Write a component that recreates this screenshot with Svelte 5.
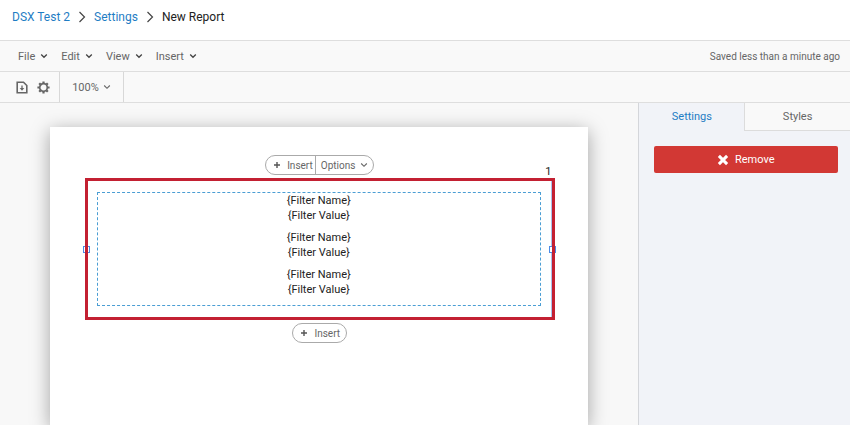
<script>
	const menus = ['File', 'Edit', 'View', 'Insert'];
	const filters = [1, 2, 3];
	let activeTab = $state('Settings');
</script>

{#snippet chevron()}
	<svg class="chevron" viewBox="0 0 8 8" aria-hidden="true"><path d="M1.2 2.5 4 5.3 6.8 2.5" /></svg>
{/snippet}

{#snippet crumbArrow()}
	<svg class="crumb-arrow" viewBox="0 0 8 12" aria-hidden="true"><path d="M1.5 1 6.5 6 1.5 11" /></svg>
{/snippet}

{#snippet plus()}
	<svg class="plus" viewBox="0 0 8 8" aria-hidden="true"><path d="M4 1v6M1 4h6" /></svg>
{/snippet}

<div class="app">
	<nav class="breadcrumbs" aria-label="Breadcrumb">
		<a href="#project">DSX Test 2</a>
		{@render crumbArrow()}
		<a href="#settings">Settings</a>
		{@render crumbArrow()}
		<span>New Report</span>
	</nav>

	<div class="menubar">
		{#each menus as menu}
			<button class="menu">{menu}{@render chevron()}</button>
		{/each}
		<span class="saved">Saved less than a minute ago</span>
	</div>

	<div class="toolbar">
		<div class="tools">
			<button class="tool" aria-label="Export">
				<svg width="12" height="13" viewBox="0 0 12 13">
					<path d="M1.2 1.2h6.3l3.3 3.3v7.3H1.2z" fill="none" stroke="#666" stroke-width="1.6" />
					<path d="M6 4.5v4" stroke="#666" stroke-width="1.3" />
					<path d="M3.7 7h4.6L6 9.8z" fill="#666" />
				</svg>
			</button>
			<button class="tool" aria-label="Report settings">
				<svg width="13" height="13" viewBox="0 0 13 13">
					<path
						d="M6.5 0.4v2M6.5 10.6v2M0.4 6.5h2M10.6 6.5h2M2.2 2.2l1.4 1.4M9.4 9.4l1.4 1.4M2.2 10.8l1.4-1.4M9.4 3.6l1.4-1.4"
						stroke="#666"
						stroke-width="2.2"
					/>
					<circle cx="6.5" cy="6.5" r="3.8" fill="none" stroke="#666" stroke-width="1.7" />
				</svg>
			</button>
		</div>
		<button class="zoom">100%{@render chevron()}</button>
	</div>

	<div class="workspace">
		<main class="canvas">
			<div class="paper">
				<div class="insert-row">
					<div class="pill">
						<button>{@render plus()}Insert</button>
						<button class="options">Options{@render chevron()}</button>
					</div>
					<span class="page-number">1</span>
				</div>

				<section class="selection">
					<span class="guide"></span>
					<span class="handle left"></span>
					<span class="handle right"></span>
					<div class="filters">
						{#each filters as filter (filter)}
							<p>&#123;Filter Name&#125;<br />&#123;Filter Value&#125;</p>
						{/each}
					</div>
				</section>

				<div class="pill single">
					<button>{@render plus()}Insert</button>
				</div>
			</div>
		</main>

		<aside class="sidebar">
			<div class="tabs" role="tablist">
				{#each ['Settings', 'Styles'] as tab}
					<button
						role="tab"
						class:active={activeTab === tab}
						aria-selected={activeTab === tab}
						onclick={() => (activeTab = tab)}>{tab}</button
					>
				{/each}
			</div>
			<button class="remove">
				<svg width="12" height="12" viewBox="0 0 12 12" aria-hidden="true">
					<path d="M1.9 1.9l8.2 8.2M10.1 1.9l-8.2 8.2" stroke="#fff" stroke-width="3" />
				</svg>
				Remove
			</button>
		</aside>
	</div>
</div>

<style>
	:global(body) {
		margin: 0;
	}

	.app {
		display: flex;
		flex-direction: column;
		min-height: 100vh;
		font-family: Roboto, 'Liberation Sans', sans-serif;
		font-size: 11px;
		color: #666;
		background: #fff;
	}

	.app * {
		box-sizing: border-box;
	}

	button {
		font: inherit;
		color: inherit;
		background: none;
		border: 0;
		padding: 0;
		display: flex;
		align-items: center;
		cursor: pointer;
		white-space: nowrap;
	}

	svg {
		flex: none;
	}

	.chevron {
		width: 8px;
		height: 8px;
		fill: none;
		stroke: currentColor;
		stroke-width: 1.1;
	}

	.plus {
		width: 8px;
		height: 8px;
		stroke: #555;
		stroke-width: 1.4;
	}

	.breadcrumbs {
		display: flex;
		align-items: center;
		gap: 8px;
		height: 41px;
		padding: 0 12px 6px;
		border-bottom: 1px solid #dedede;
		font-size: 12px;
		color: #222;
	}

	.breadcrumbs a {
		color: #1f7dc4;
		text-decoration: none;
	}

	.crumb-arrow {
		width: 8px;
		height: 12px;
		fill: none;
		stroke: #444;
		stroke-width: 1.2;
	}

	.menubar {
		display: flex;
		align-items: center;
		gap: 13px;
		height: 31px;
		padding: 0 10px 0 18px;
		background: #f9f9f9;
		border-bottom: 1px solid #dedede;
	}

	.menu {
		gap: 5px;
	}

	.menu .chevron {
		stroke: #444;
		stroke-width: 1.3;
	}

	.saved {
		margin-left: auto;
		font-size: 10px;
	}

	.toolbar {
		display: flex;
		height: 31px;
		background: #f9f9f9;
		border-bottom: 1px solid #dedede;
	}

	.tools {
		display: flex;
		align-items: center;
		gap: 9px;
		width: 60px;
		padding-left: 16px;
		border-right: 1px solid #d8d8d8;
	}

	.zoom {
		justify-content: center;
		gap: 4px;
		width: 64px;
		border-right: 1px solid #d8d8d8;
	}

	.workspace {
		display: flex;
		flex: 1;
	}

	.canvas {
		display: flex;
		flex: 1;
		padding: 24px 50px 0;
		background: #f8f8f8;
		overflow: hidden;
	}

	.paper {
		flex: 1;
		isolation: isolate;
		padding: 28px 33px 0 35px;
		background: #fff;
		box-shadow: 0 4px 18px rgba(0, 0, 0, 0.35);
	}

	.insert-row {
		display: grid;
		grid-template-columns: 1fr auto 1fr;
		height: 23px;
	}

	.insert-row .pill {
		grid-column: 2;
	}

	.page-number {
		align-self: end;
		justify-self: end;
		padding-right: 3px;
		line-height: 12px;
		color: #222;
	}

	.pill {
		display: flex;
		width: max-content;
		height: 20px;
		border: 1px solid #aaa;
		border-radius: 10px;
		background: #fff;
		font-size: 10px;
	}

	.pill button {
		gap: 6px;
		padding: 0 2px 0 7px;
	}

	.pill .options {
		gap: 5px;
		padding: 0 5px;
		border-left: 1px solid #aaa;
	}

	.pill.single {
		margin: 3px auto 0;
	}

	.pill.single button {
		padding-right: 6px;
	}

	.selection {
		position: relative;
		padding: 11px 11px 11px 9px;
		border: 3px solid #c32032;
	}

	/* guide and handles sit under the selection frame */
	.guide {
		position: absolute;
		z-index: -1;
		top: 0;
		right: 0;
		bottom: 0;
		border-right: 1px solid #a9c3ee;
	}

	.handle {
		position: absolute;
		z-index: -1;
		top: 50%;
		width: 7px;
		height: 7px;
		margin-top: -3px;
		border: 1px solid #4a8ae8;
		background: #fff;
	}

	.handle.left {
		left: -5px;
	}

	.handle.right {
		right: -4px;
	}

	.filters {
		display: flex;
		flex-direction: column;
		gap: 7px;
		height: 114px;
		border: 1px dashed #4b9ed4;
		text-align: center;
		line-height: 15px;
		color: #222;
	}

	.filters p {
		margin: 0;
	}

	.sidebar {
		width: 25%;
		border-left: 1px solid #d4d6da;
		background: #f1f3f8;
	}

	.tabs {
		display: grid;
		grid-template-columns: 1fr 1fr;
		height: 28px;
	}

	.tabs button {
		justify-content: center;
		border-left: 1px solid #dcdcdc;
		border-bottom: 1px solid #dcdcdc;
		background: #f9f9f9;
	}

	.tabs button.active {
		border-color: transparent;
		background: none;
		color: #1f7dc4;
	}

	.remove {
		justify-content: center;
		gap: 6px;
		width: calc(100% - 27px);
		height: 27px;
		margin: 15px 12px 0 15px;
		border-radius: 2px;
		background: #d23834;
		color: #fff;
	}
</style>
